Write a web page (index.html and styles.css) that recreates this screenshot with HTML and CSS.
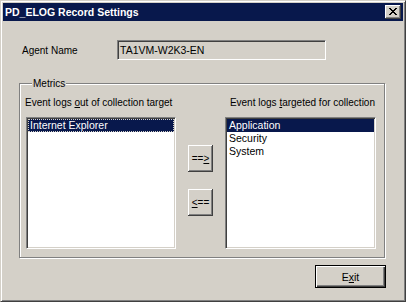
FILE: index.html
```html
<!DOCTYPE html>
<html>
<head>
<meta charset="utf-8">
<link rel="stylesheet" href="styles.css">
</head>
<body>
<div class="window">
  <div class="titlebar">
    <span class="title">PD_ELOG Record Settings</span>
    <button class="close" aria-label="Close">
      <svg width="8" height="7" viewBox="0 0 8 7" shape-rendering="crispEdges">
        <path fill="#000" d="M0 0h2v1H0zM6 0h2v1H6zM1 1h2v1H1zM5 1h2v1H5zM2 2h4v1H2zM3 3h2v1H3zM2 4h4v1H2zM1 5h2v1H1zM5 5h2v1H5zM0 6h2v1H0zM6 6h2v1H6z"/>
      </svg>
    </button>
  </div>
  <div class="client">
    <div class="agent-row">
      <span class="agent-label">Agent Name</span>
      <div class="textbox">TA1VM-W2K3-EN</div>
    </div>
    <fieldset class="metrics">
      <legend>Metrics</legend>
      <div class="metrics-grid">
        <div class="col-label left">Event logs <u>o</u>ut of collection target</div>
        <div></div>
        <div class="col-label right">Event logs <u>t</u>argeted for collection</div>
        <ul class="listbox">
          <li class="sel focus">Internet Explorer</li>
        </ul>
        <div class="movers">
          <button class="btn mover">==<u>&gt;</u></button>
          <button class="btn mover"><u>&lt;</u>==</button>
        </div>
        <ul class="listbox">
          <li class="sel">Application</li>
          <li>Security</li>
          <li>System</li>
        </ul>
      </div>
    </fieldset>
    <div class="footer">
      <button class="btn default">E<u>x</u>it</button>
    </div>
  </div>
</div>
</body>
</html>
```
FILE: styles.css
```css
html, body {
  margin: 0;
  padding: 0;
  background: #d4d0c8;
}
body {
  font-family: "Liberation Sans", Arial, sans-serif;
  font-size: 10px;
  color: #000;
}
.window {
  width: 406px;
  height: 302px;
  box-sizing: border-box;
  background: #d4d0c8;
  border: 1px solid;
  border-color: #d4d0c8 #404040 #404040 #d4d0c8;
  box-shadow: inset 1px 1px 0 #fff, inset -1px -1px 0 #808080;
  padding: 2px;
  display: flex;
  flex-direction: column;
}
.titlebar {
  height: 18px;
  background: #08184c;
  display: flex;
  align-items: center;
  padding: 0 2px;
}
.title {
  color: #fff;
  font-weight: bold;
  font-size: 10.5px;
}
.close {
  margin-left: auto;
  width: 16px;
  height: 14px;
  padding: 0;
  border: none;
  background: #d4d0c8;
  box-shadow: inset -1px -1px 0 #404040, inset 1px 1px 0 #fff, inset -2px -2px 0 #808080;
  display: flex;
  align-items: center;
  justify-content: center;
}
.close svg {
  display: block;
  margin-top: -1px;
}
.client {
  flex: 1;
  padding: 19px 18px 0 16px;
  display: flex;
  flex-direction: column;
}
.agent-row {
  display: flex;
  align-items: center;
  padding-left: 3px;
  height: 20px;
}
.agent-label {
  width: 95px;
}
.textbox {
  width: 209px;
  height: 20px;
  box-sizing: border-box;
  border: 1px solid;
  border-color: #808080 #fff #fff #808080;
  box-shadow: inset 1px 1px 0 #404040, inset -1px -1px 0 #d4d0c8;
  padding: 0 2px;
  line-height: 18px;
  font-size: 10.5px;
  background: #d4d0c8;
}
.metrics {
  margin: 17px 0 0 0;
  padding: 6px 8px 8px 6px;
  min-width: 0;
  border: 1px solid #808080;
  box-shadow: 1px 1px 0 #fff, inset 1px 1px 0 #fff;
}
.metrics legend {
  padding: 0 1px;
  margin-left: 6px;
  line-height: 13px;
  background: #d4d0c8;
}
.metrics-grid {
  display: grid;
  grid-template-columns: 150px 1fr 151px;
  grid-template-rows: 13px 132px;
  row-gap: 8px;
}
.col-label {
  line-height: 13px;
  white-space: nowrap;
}
.col-label.left {
  margin-left: -1px;
}
.col-label.right {
  text-align: right;
  margin-right: 1px;
}
.listbox {
  margin: 0;
  list-style: none;
  background: #fff;
  border: 1px solid;
  border-color: #808080 #fff #fff #808080;
  box-shadow: inset 1px 1px 0 #404040, inset -1px -1px 0 #d4d0c8;
  padding: 1px;
}
.listbox li {
  height: 13px;
  line-height: 13px;
  padding-left: 2px;
  white-space: nowrap;
  font-size: 10.5px;
}
.listbox li.sel {
  background: #08184c;
  color: #fff;
}
.listbox li.focus {
  outline: 1px dotted #d4d0c8;
  outline-offset: -1px;
}
.movers {
  display: flex;
  flex-direction: column;
  align-items: center;
  gap: 17px;
  padding-top: 28px;
}
.btn {
  font-family: "Liberation Sans", Arial, sans-serif;
  font-size: 10px;
  color: #000;
  background: #d4d0c8;
  padding: 0;
  border: none;
  box-shadow: inset -1px -1px 0 #404040, inset 1px 1px 0 #fff, inset -2px -2px 0 #808080;
}
.mover {
  width: 25px;
  height: 27px;
}
.footer {
  display: flex;
  justify-content: flex-end;
  margin-top: 7px;
  margin-right: -1px;
}
.btn.default {
  width: 71px;
  height: 23px;
  font-size: 10.5px;
  border: 1px solid #000;
  box-shadow: inset 1px 1px 0 #fff, inset -1px -1px 0 #404040, inset -2px -2px 0 #808080;
}
```
